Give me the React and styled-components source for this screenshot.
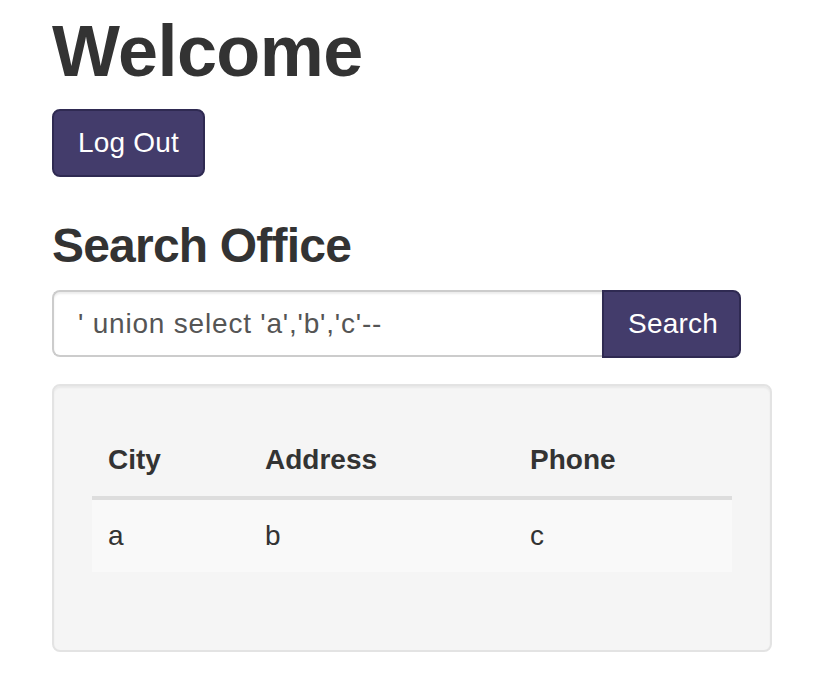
import React from "react";
import styled, { createGlobalStyle } from "styled-components";

const GlobalStyle = createGlobalStyle`
  * { box-sizing: border-box; }
  body {
    margin: 0;
    background: #fff;
    font-family: "Liberation Sans", Arial, Helvetica, sans-serif;
    font-size: 28px;
    line-height: 40px;
    color: #333;
  }
`;

const Page = styled.div`
  padding: 1px 48px 0 52px;
  width: 820px;
`;

const Title = styled.h1`
  font-size: 72px;
  line-height: 79px;
  font-weight: 700;
  margin: 11px 0 18px;
  letter-spacing: -0.6px;
`;

const Button = styled.button`
  font-family: inherit;
  font-size: 28px;
  line-height: 40px;
  color: #fff;
  background: #433c6b;
  border: 2px solid #2f2a52;
  border-radius: ${(p) => (p.$attached ? "0 8px 8px 0" : "8px")};
  width: ${(p) => (p.$attached ? "139px" : "auto")};
  padding: 12px 24px;
  height: 68px;
  letter-spacing: 0.2px;
  cursor: pointer;
`;

const SubTitle = styled.h3`
  font-size: 48px;
  line-height: 53px;
  font-weight: 700;
  letter-spacing: -0.8px;
  margin: 42px 0 18px;
`;

const InputGroup = styled.div`
  display: flex;
  width: 689px;
  height: 67px;
`;

const SearchInput = styled.input`
  flex: 1;
  min-width: 0;
  font-family: inherit;
  font-size: 28px;
  letter-spacing: 0.8px;
  color: #555;
  padding: 12px 24px;
  border: 2px solid #ccc;
  border-right: none;
  border-radius: 8px 0 0 8px;
  outline: none;
  box-shadow: inset 0 2px 2px rgba(0, 0, 0, 0.075);
`;

const Well = styled.div`
  margin-top: 27px;
  width: 720px;
  background: #f5f5f5;
  border: 2px solid #e3e3e3;
  border-radius: 8px;
  padding: 38px;
  box-shadow: inset 0 2px 2px rgba(0, 0, 0, 0.05);
`;

const Table = styled.table`
  width: 100%;
  border-collapse: collapse;
  border-spacing: 0;
  margin-bottom: 40px;
`;

const Th = styled.th`
  text-align: left;
  font-weight: 700;
  padding: 16px;
  line-height: 40px;
  border-bottom: 4px solid #ddd;
  width: ${(p) => p.$w}px;
`;

const Row = styled.tr`
  background: #f9f9f9;
`;

const Td = styled.td`
  padding: 16px;
  line-height: 40px;
`;

export default function App() {
  return (
    <>
      <GlobalStyle />
      <Page>
        <Title>Welcome</Title>
        <Button>Log Out</Button>
        <SubTitle>Search Office</SubTitle>
        <InputGroup>
          <SearchInput defaultValue="' union select 'a','b','c'--" />
          <Button $attached>Search</Button>
        </InputGroup>
        <Well>
          <Table>
            <thead>
              <tr>
                <Th $w={157}>City</Th>
                <Th $w={265}>Address</Th>
                <Th $w={218}>Phone</Th>
              </tr>
            </thead>
            <tbody>
              <Row>
                <Td>a</Td>
                <Td>b</Td>
                <Td>c</Td>
              </Row>
            </tbody>
          </Table>
        </Well>
      </Page>
    </>
  );
}
